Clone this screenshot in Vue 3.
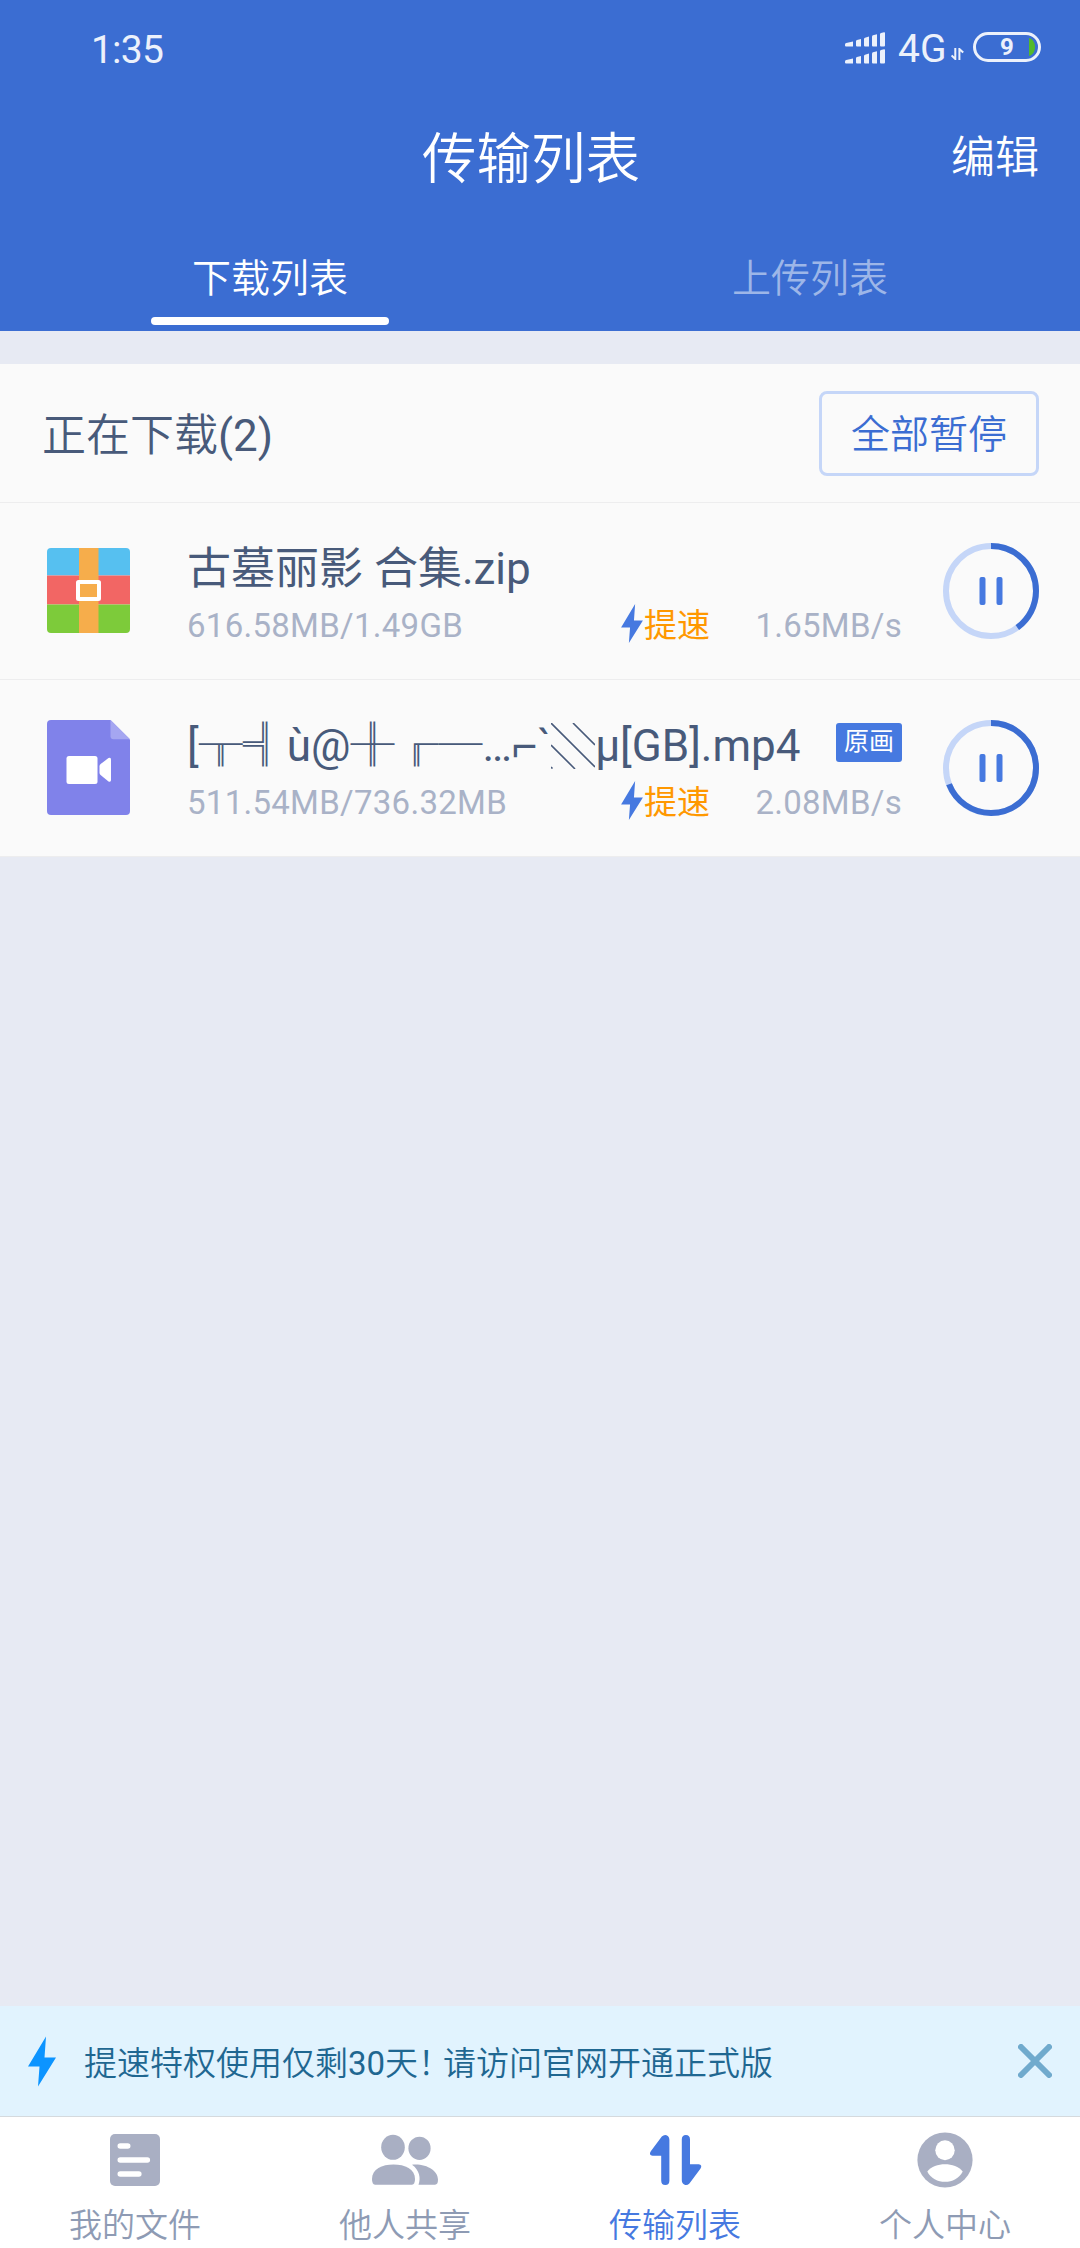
<script setup>
import { ref, computed } from 'vue';

const tabs = ['下载列表', '上传列表'];
const activeTab = ref(0);
const showBanner = ref(true);

const downloads = ref([
  {
    type: 'zip',
    name: '古墓丽影 合集.zip',
    size: '616.58MB/1.49GB',
    speed: '1.65MB/s',
    progress: 0.4
  },
  {
    type: 'video',
    name: '[╥╣ù@╫╓─…⌐`',
    nameEnd: 'µ[GB].mp4',
    size: '511.54MB/736.32MB',
    speed: '2.08MB/s',
    badge: '原画',
    progress: 0.69
  }
]);

const navItems = [
  { id: 'files', label: '我的文件' },
  { id: 'share', label: '他人共享' },
  { id: 'transfer', label: '传输列表' },
  { id: 'me', label: '个人中心' }
];
const activeNav = ref('transfer');

const count = computed(() => downloads.value.length);

// circumference of the r=45 progress ring
const ringLength = 2 * Math.PI * 45;
function ringDash(progress) {
  return `${ringLength * progress} ${ringLength}`;
}
</script>

<template>
  <div class="page">
    <header class="header">
      <div class="status">
        <span class="time">1:35</span>
        <div class="status-right">
          <svg class="signal" width="40" height="32" viewBox="0 0 40 32">
            <g id="bars" fill="#ecf1fb">
              <path d="M0 12.5Q0 11.3 1.2 11L8 9.5V14.5H1Q0 14.5 0 13.5Z" />
              <path d="M11 9Q11 8.3 12 8L16 7V14.5H12Q11 14.5 11 13.5Z" />
              <path d="M19 6.8Q19 6 20 5.7L24 4.6V14.5H20Q19 14.5 19 13.5Z" />
              <path d="M27 4.4Q27 3.6 28 3.3L32 2.2V14.5H28Q27 14.5 27 13.5Z" />
              <path d="M35 2Q35 1.2 36 .9L39 .2Q40 0 40 1V13.5Q40 14.5 39 14.5H36Q35 14.5 35 13.5Z" />
            </g>
            <use href="#bars" y="17" />
          </svg>
          <span class="network">4G</span>
          <svg class="updown" width="13" height="12" viewBox="0 0 13 12" fill="none" stroke="#ecf1fb" stroke-width="2">
            <path d="M4.3 0V11L.6 7.4M8.4 12V1L12.2 4.6" />
          </svg>
          <div class="battery">
            <span>9</span>
            <svg width="6" height="18" viewBox="0 0 6 18"><path d="M0 0C8 2 8 16 0 18Z" fill="#53b92b" /></svg>
          </div>
        </div>
      </div>
      <div class="title-bar">
        <h1>传输列表</h1>
        <span class="edit">编辑</span>
      </div>
      <div class="tabs">
        <div v-for="(tab, i) in tabs" :key="tab" class="tab" :class="{ active: activeTab === i }" @click="activeTab = i">
          <span>{{ tab }}</span>
          <i></i>
        </div>
      </div>
    </header>

    <section class="list">
      <div class="list-head">
        <h2><span class="thin">正在下载</span>({{ count }})</h2>
        <button class="pause-all">全部暂停</button>
      </div>
      <div v-for="item in downloads" :key="item.name" class="row">
        <div class="file-icon">
          <svg v-if="item.type === 'zip'" width="83" height="85" viewBox="0 0 83 85">
            <path d="M0 27.5V4Q0 0 4 0H79Q83 0 83 4V27.5Z" fill="#56c0f0" />
            <path d="M0 27.5H83V56.5H0Z" fill="#f26664" />
            <path d="M0 56.5H83V81Q83 85 79 85H4Q0 85 0 81Z" fill="#7dcb3a" />
            <path d="M32 0H51.5V85H32Z" fill="#f6ad4b" />
            <rect x="31" y="34" width="21" height="17" rx=".5" fill="#f6ad4b" stroke="#fff" stroke-width="4" />
          </svg>
          <svg v-else width="83" height="95" viewBox="0 0 83 95">
            <path d="M4 0H63.5L83 19.5V91Q83 95 79 95H4Q0 95 0 91V4Q0 0 4 0Z" fill="#8082ea" />
            <path d="M63.5 0L83 19.3H66.5Q63.5 19.3 63.5 16.3Z" fill="#a5a6f1" />
            <rect x="19.5" y="36" width="31" height="28" rx="2.5" fill="#fff" />
            <path d="M52.5 46.5Q52.5 45 53.6 44.1L61.5 38Q64 36.8 64 39.5V60Q64 62.5 61.5 61.5L53.6 55Q52.5 54 52.5 52.5Z" fill="#fff" />
          </svg>
        </div>
        <div class="info">
          <div class="line name">
            <span>{{ item.name }}</span>
            <svg v-if="item.nameEnd" class="shade" width="44" height="46" viewBox="0 0 44 46" fill="none" stroke="#485a7a" stroke-width="1.6">
              <path d="M0 0L44 44M22 0L44 22M0 22L24 46M0 44L1.5 45.5" />
            </svg>
            <span v-if="item.nameEnd">{{ item.nameEnd }}</span>
            <em v-if="item.badge" class="badge">{{ item.badge }}</em>
          </div>
          <div class="line meta">
            <span class="size">{{ item.size }}</span>
            <svg class="bolt" width="22" height="39" viewBox="0 0 28 50"><path d="M18 0L16.5 21H28L10 50L11.5 30H0Z" fill="#4679e0" /></svg>
            <span class="boost">提速</span>
            <span class="speed">{{ item.speed }}</span>
          </div>
        </div>
        <svg class="ring" width="96" height="96" viewBox="0 0 96 96" fill="none">
          <circle cx="48" cy="48" r="45" stroke="#c5d6f8" stroke-width="6" />
          <circle cx="48" cy="48" r="45" stroke="#3b6dd2" stroke-width="6" :stroke-dasharray="ringDash(item.progress)" transform="rotate(-90 48 48)" />
          <rect x="36.5" y="34" width="6" height="28" rx="2" fill="#4679e0" />
          <rect x="53.5" y="34" width="6" height="28" rx="2" fill="#4679e0" />
        </svg>
      </div>
    </section>

    <div class="spacer"></div>

    <div v-if="showBanner" class="banner">
      <svg width="28" height="51" viewBox="0 0 28 50"><path d="M18 0L16.5 21H28L10 50L11.5 30H0Z" fill="#0c94ff" /></svg>
      <p>提速特权使用仅剩<b>30</b>天<span class="mark">！</span>请访问官网开通正式版</p>
      <svg class="close" width="34" height="34" viewBox="0 0 34 34" @click="showBanner = false">
        <path d="M3 3L31 31M31 3L3 31" stroke="#70aacd" stroke-width="6" stroke-linecap="round" />
      </svg>
    </div>

    <nav class="nav">
      <div v-for="item in navItems" :key="item.id" class="nav-item" :class="{ active: activeNav === item.id }" @click="activeNav = item.id">
        <svg width="68" height="56" viewBox="0 0 68 56" fill="#a9afc3">
          <template v-if="item.id === 'files'">
            <rect x="9" y="2" width="50" height="52" rx="5" />
            <path d="M19.3 14H26.7M19.3 28H46.3M19.3 42H37.8" stroke="#fff" stroke-width="5.6" stroke-linecap="round" />
          </template>
          <template v-else-if="item.id === 'share'">
            <ellipse cx="22" cy="15.3" rx="11.8" ry="12.5" />
            <ellipse cx="48.5" cy="16.3" rx="11.1" ry="11.6" />
            <path d="M1 47C1 37 11 32.5 22.5 32.5S44 37 44 47Q44 52.7 41 52.7H4Q1 52.7 1 47Z" />
            <path d="M41 32.7C56 31.5 67 39 67 47.5Q67 52.7 64 52.7H47.5C50 46 48.5 38 41 32.7Z" />
          </template>
          <template v-else-if="item.id === 'transfer'">
            <path d="M20.2 23.7H11.5Q7.4 23 9.8 19.2L20.8 4.6Q23 2.4 25.5 3.2Q28.4 4.4 28.4 8V48.5Q28.4 53 24.3 53T20.2 48.5Z" />
            <path d="M49 32.3H57.7Q61.8 33 59.4 36.8L48.4 51.4Q46.2 53.6 43.7 52.8Q40.8 51.6 40.8 48V7.5Q40.8 3 44.9 3T49 7.5Z" />
          </template>
          <template v-else>
            <circle cx="34" cy="28" r="27.6" />
            <ellipse cx="34" cy="18.3" rx="9.7" ry="10" fill="#fff" />
            <path d="M16.3 39.5C24 29.8 44 29.8 51.7 39.5C45 53.3 23 53.3 16.3 39.5Z" fill="#fff" />
          </template>
        </svg>
        <span>{{ item.label }}</span>
      </div>
    </nav>
  </div>
</template>

<style>
body {
  margin: 0;
}
</style>

<style scoped>
.page {
  display: flex;
  flex-direction: column;
  width: 1080px;
  height: 2248px;
  background: #e7eaf3;
  font-family: Roboto, "Noto Sans CJK SC", sans-serif;
  overflow: hidden;
}

svg {
  display: block;
  flex: none;
}

h1, h2, p {
  margin: 0;
  font-weight: 400;
}

b {
  font-weight: 400;
}

.thin {
  font-weight: 350;
}

.header {
  height: 331px;
  background: #3b6dd2;
  color: #fff;
}

.status {
  display: flex;
  justify-content: space-between;
  height: 98px;
  padding: 0 39px 0 91px;
  color: #ecf1fb;
}

.time {
  font-size: 39px;
  line-height: 100px;
  letter-spacing: -0.8px;
}

.status-right {
  display: flex;
}

.signal {
  margin-top: 32px;
}

.network {
  margin-left: 13px;
  width: 53px;
  font-size: 39px;
  line-height: 98px;
}

.updown {
  margin-top: 48px;
}

.battery {
  display: flex;
  align-items: center;
  justify-content: flex-end;
  box-sizing: border-box;
  width: 68px;
  height: 30px;
  margin: 32px 0 0 9px;
  padding-right: 3px;
  border: 3px solid #ecf1fb;
  border-radius: 15px;
}

.battery span {
  width: 29px;
  font-size: 24px;
  font-weight: 700;
  line-height: 24px;
}

.title-bar {
  display: flex;
  align-items: center;
  height: 112px;
  padding-right: 41px;
}

h1 {
  flex: 1;
  padding-left: 111px;
  text-align: center;
  font-size: 54.5px;
  font-weight: 350;
}

.edit {
  font-size: 44px;
  font-weight: 350;
}

.tabs {
  display: flex;
}

.tab {
  display: flex;
  flex: 1;
  flex-direction: column;
  align-items: center;
  font-size: 39px;
  font-weight: 350;
  line-height: 60px;
  padding-top: 39px;
  color: #9db6e8;
}

.tab i {
  width: 238px;
  height: 8px;
  margin-top: 8px;
  border-radius: 4px;
}

.tab.active {
  color: #fff;
}

.tab.active i {
  background: #fff;
}

.list {
  margin-top: 33px;
  background: #fafafa;
}

.list-head {
  display: flex;
  align-items: center;
  justify-content: space-between;
  height: 138px;
  padding: 0 41px 0 42px;
  border-bottom: 1px solid #ededee;
}

h2 {
  padding-bottom: 3px;
  font-size: 44px;
  color: #485a7a;
}

.pause-all {
  box-sizing: border-box;
  width: 220px;
  height: 85px;
  padding: 0 0 4px;
  border: 3px solid #c5d6f8;
  border-radius: 8px;
  background: none;
  font-family: inherit;
  font-size: 39px;
  font-weight: 350;
  color: #3b6dd2;
}

.row {
  display: flex;
  align-items: center;
  height: 176px;
  padding: 0 41px 0 46.5px;
  border-bottom: 1px solid #ededee;
}

.file-icon {
  padding-bottom: 1px;
}

.info {
  width: 715px;
  margin: 0 41px 0 57.5px;
  padding-top: 11px;
}

.line {
  display: flex;
  align-items: center;
  white-space: nowrap;
}

.name {
  height: 58px;
  font-size: 44px;
  line-height: 58px;
  color: #485a7a;
}

.badge {
  width: 66px;
  height: 39px;
  margin: 0 0 7px auto;
  border-radius: 3px;
  background: #4679e0;
  color: #fff;
  font-size: 25px;
  font-style: normal;
  line-height: 38px;
  text-align: center;
}

.meta {
  height: 56px;
  font-size: 33px;
  line-height: 56px;
  color: #a9b2c7;
}

.size {
  width: 434px;
  letter-spacing: 0.28px;
}

.bolt {
  margin-bottom: 4px;
}

.boost {
  margin-left: 1px;
  color: #ff9800;
}

.speed {
  margin-left: auto;
  letter-spacing: 0.28px;
}

.spacer {
  flex: 1;
}

.banner {
  display: flex;
  align-items: center;
  height: 110px;
  padding: 0 28px;
  border-bottom: 1px solid #d5dade;
  background: #e1f3fe;
}

.banner p {
  flex: 1;
  padding-left: 28px;
  font-size: 33px;
  font-weight: 350;
  color: #1f6791;
}

.mark {
  letter-spacing: -8px;
}

.nav {
  display: flex;
  height: 131px;
  background: #fff;
}

.nav-item {
  display: flex;
  flex: 1;
  flex-direction: column;
  align-items: center;
  padding-top: 15px;
  color: #8e9bb4;
}

.nav-item span {
  margin-top: 14px;
  font-size: 33px;
  line-height: 48px;
  font-weight: 350;
}

.nav-item.active {
  color: #4679e0;
}

.nav-item.active svg {
  fill: #4679e0;
}
</style>
